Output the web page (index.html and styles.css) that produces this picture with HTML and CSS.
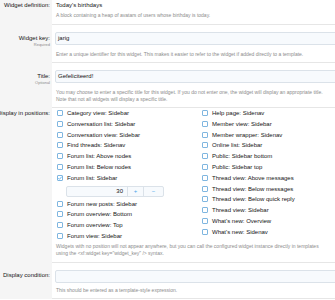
FILE: index.html
```html
<!DOCTYPE html>
<html lang="en">
<head>
  <meta charset="UTF-8" />
  <title>Widget</title>
  <link rel="stylesheet" href="styles.css">
</head>
<body>
  <div class="form">
    <dl class="row">
      <dt><span class="label">Widget definition:</span></dt>
      <dd>
        <div class="value">Today's birthdays</div>
        <div class="explain">A block containing a heap of avatars of users whose birthday is today.</div>
      </dd>
    </dl>

    <dl class="row">
      <dt class="with-input"><span class="label">Widget key:</span><span class="hint">Required</span></dt>
      <dd>
        <div class="input">jarig</div>
        <div class="explain">Enter a unique identifier for this widget. This makes it easier to refer to the widget if added directly to a template.</div>
      </dd>
    </dl>

    <dl class="row">
      <dt class="with-input"><span class="label">Title:</span><span class="hint">Optional</span></dt>
      <dd>
        <div class="input">Gefeliciteerd!</div>
        <div class="explain">You may choose to enter a specific title for this widget. If you do not enter one, the widget will display an appropriate title. Note that not all widgets will display a specific title.</div>
      </dd>
    </dl>

    <dl class="row">
      <dt class="positions"><span class="label">Display in positions:</span></dt>
      <dd>
        <div class="columns">
          <ul class="checks">
            <li><span class="box"></span>Category view: Sidebar</li>
            <li><span class="box"></span>Conversation list: Sidebar</li>
            <li><span class="box"></span>Conversation view: Sidebar</li>
            <li><span class="box"></span>Find threads: Sidenav</li>
            <li><span class="box"></span>Forum list: Above nodes</li>
            <li><span class="box"></span>Forum list: Below nodes</li>
            <li>
              <span class="box checked"><svg viewBox="0 0 6 6" width="6" height="6"><path d="M1.3 3.1 L2.5 4.3 L4.7 1.7" fill="none" stroke="#47a7eb" stroke-width="0.8"/></svg></span>Forum list: Sidebar
              <div class="spin">
                <span class="spin-value">30</span>
                <span class="spin-btn plus">+</span>
                <span class="spin-btn">&minus;</span>
              </div>
            </li>
            <li><span class="box"></span>Forum new posts: Sidebar</li>
            <li><span class="box"></span>Forum overview: Bottom</li>
            <li><span class="box"></span>Forum overview: Top</li>
            <li><span class="box"></span>Forum view: Sidebar</li>
          </ul>
          <ul class="checks">
            <li><span class="box"></span>Help page: Sidenav</li>
            <li><span class="box"></span>Member view: Sidebar</li>
            <li><span class="box"></span>Member wrapper: Sidenav</li>
            <li><span class="box"></span>Online list: Sidebar</li>
            <li><span class="box"></span>Public: Sidebar bottom</li>
            <li><span class="box"></span>Public: Sidebar top</li>
            <li><span class="box"></span>Thread view: Above messages</li>
            <li><span class="box"></span>Thread view: Below messages</li>
            <li><span class="box"></span>Thread view: Below quick reply</li>
            <li><span class="box"></span>Thread view: Sidebar</li>
            <li><span class="box"></span>What's new: Overview</li>
            <li><span class="box"></span>What's new: Sidenav</li>
          </ul>
        </div>
        <div class="explain notes">Widgets with no position will not appear anywhere, but you can call the configured widget instance directly in templates using the &lt;xf:widget key="widget_key" /&gt; syntax.</div>
      </dd>
    </dl>

    <dl class="row">
      <dt class="with-input"><span class="label">Display condition:</span></dt>
      <dd>
        <div class="input"></div>
        <div class="explain tight">This should be entered as a template-style expression.</div>
      </dd>
    </dl>
  </div>
</body>
</html>
```

FILE: styles.css
```css
body {
  margin: 0;
  font-family: "Liberation Sans", Arial, sans-serif;
  color: #141414;
  background: #fff;
  overflow: hidden;
}

.form {
  width: 345px;
}

.row {
  display: flex;
  margin: 0;
}

.row dt {
  width: 50px;
  flex-shrink: 0;
  background: #f5f5f5;
  display: flex;
  flex-direction: column;
  align-items: flex-end;
  padding: 1px 2px 0 0;
  white-space: nowrap;
}

.row dt.with-input {
  padding-top: 8.5px;
}

.row dt.positions {
  padding-top: 1px;
}

.label {
  font-size: 6px;
  line-height: 8px;
}

.hint {
  font-size: 4px;
  line-height: 5px;
  color: #8c8c8c;
}

.row dd {
  flex: 1;
  margin: 0;
  padding: 1px 0 4px 3px;
  border-bottom: 1px solid #e6e6e6;
}

.row:first-child dd {
  padding-bottom: 5px;
}

.value {
  font-size: 6px;
  line-height: 8px;
  padding-left: 1px;
}

.explain {
  font-size: 5px;
  line-height: 7px;
  color: #8c8c8c;
  margin-top: 3px;
  padding-left: 1px;
  width: 270px;
}

.input {
  height: 11px;
  border: 1px solid #dbe2e9;
  border-radius: 2px;
  background: #f7fafd;
  font-size: 6px;
  line-height: 11px;
  padding-left: 2px;
  margin-top: 6px;
}

.input + .explain {
  margin-top: 6px;
}

.input + .explain.tight {
  margin-top: 4px;
}

.columns {
  display: flex;
  margin-top: -1px;
}

.checks {
  list-style: none;
  margin: 0;
  padding: 0 0 0 2px;
  width: 143px;
}

.checks li {
  font-size: 6px;
  line-height: 10.8px;
  color: #141414;
}

.box {
  display: inline-block;
  box-sizing: border-box;
  width: 6px;
  height: 6px;
  border: 1px solid #7fb6e0;
  border-radius: 1px;
  background: #fff;
  vertical-align: -1px;
  margin-right: 4px;
  position: relative;
}

.box svg {
  position: absolute;
  left: -1px;
  top: -1px;
}

.spin {
  display: flex;
  width: 96px;
  height: 9px;
  margin: 2px 0 2px 9px;
  border: 1px solid #dbe2e9;
  border-radius: 2px;
  background: #f7fafd;
  font-size: 6px;
  line-height: 9px;
}

.spin-value {
  flex: 1;
  text-align: right;
  padding-right: 4px;
}

.spin-btn {
  width: 19px;
  text-align: center;
  border-left: 1px solid #dbe2e9;
  color: #47a7eb;
}

.spin-btn.plus {
  width: 15px;
}

.notes {
  margin-top: 1px;
  line-height: 7.5px;
}
```
